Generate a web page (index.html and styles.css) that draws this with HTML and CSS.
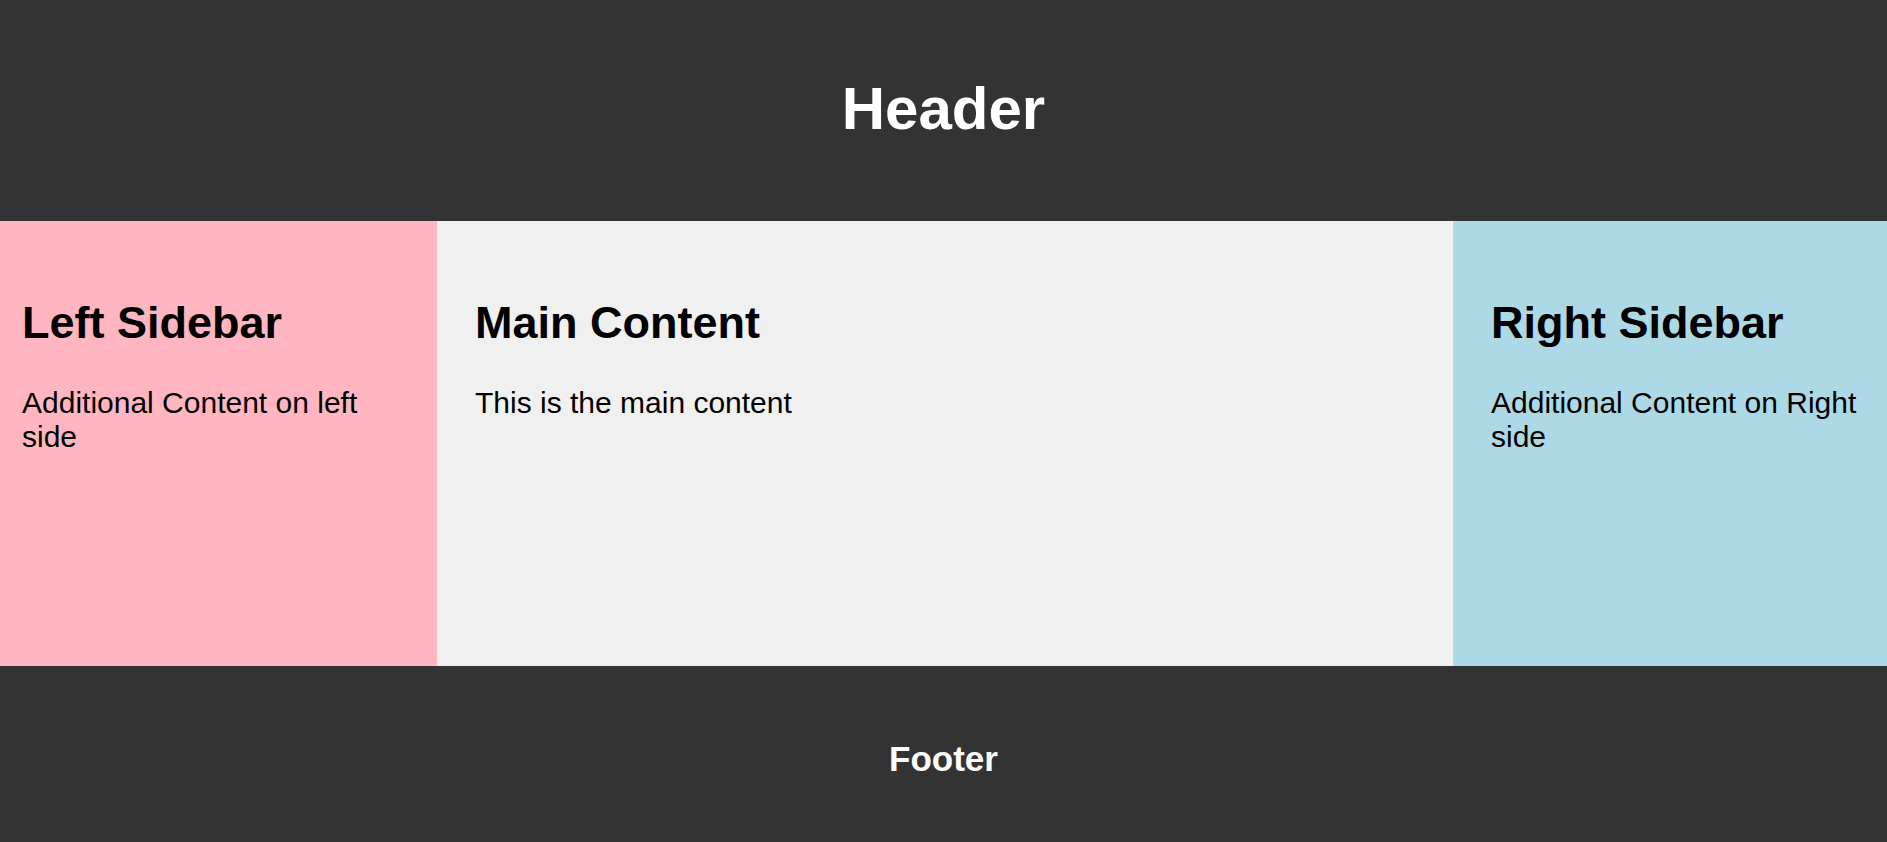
FILE: index.html
```html
<!DOCTYPE html>
<html>
<head>
<meta charset="utf-8">
<link rel="stylesheet" href="styles.css">
</head>
<body>
<header class="header"><h1>Header</h1></header>
<div class="layout">
  <aside class="left">
    <h2>Left Sidebar</h2>
    <p>Additional Content on left side</p>
  </aside>
  <main class="main">
    <h2>Main Content</h2>
    <p>This is the main content</p>
  </main>
  <aside class="right">
    <h2>Right Sidebar</h2>
    <p>Additional Content on Right side</p>
  </aside>
</div>
<footer class="footer"><h3>Footer</h3></footer>
</body>
</html>
```
FILE: styles.css
```css
html, body {
  margin: 0;
  padding: 0;
}
body {
  font-family: "Liberation Sans", Arial, sans-serif;
  font-size: 30px;
  color: #000;
  background: #333;
}
.header {
  background: #333;
  color: #fff;
  text-align: center;
  padding: 74px 0 78px;
}
.header h1 {
  margin: 0;
  font-size: 60px;
  font-weight: bold;
  line-height: 69px;
}
.layout {
  display: grid;
  grid-template-columns: 437px 1fr 434px;
  height: 445px;
}
.layout h2 {
  font-size: 45px;
  margin: 37px 0;
  line-height: 1.15;
}
.layout p {
  margin: 30px 0;
  line-height: 1.15;
}
.left {
  background: #ffb6c1;
  padding: 39px 22px;
}
.main {
  background: #f0f0f0;
  padding: 39px 38px;
}
.right {
  background: #add8e6;
  padding: 39px 22px 39px 38px;
}
.footer {
  background: #333;
  color: #fff;
  text-align: center;
  padding: 73px 0 63px;
}
.footer h3 {
  margin: 0;
  font-size: 35px;
  line-height: 40px;
}
```
